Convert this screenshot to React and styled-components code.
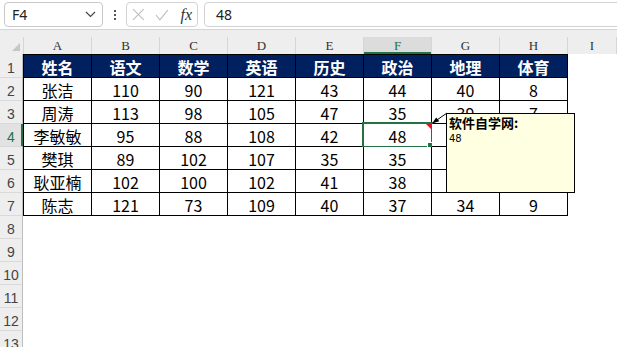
import styled, { createGlobalStyle } from "styled-components";

const GlobalStyle = createGlobalStyle`
  html, body { margin: 0; padding: 0; background: #fff; overflow: hidden; }
  body { font-family: "Noto Sans CJK SC", sans-serif; }
  * { box-sizing: border-box; }
`;

const GREEN = "#217346";

const Toolbar = styled.div`
  display: flex;
  align-items: center;
  height: 30px;
  padding-left: 4px;
  border-bottom: 1px solid #d4d4d4;
  background: #fff;
  overflow: hidden;
`;

const NameBox = styled.div`
  width: 99px;
  height: 25px;
  border: 1px solid #c9c9c9;
  border-radius: 4px;
  display: flex;
  align-items: center;
  justify-content: space-between;
  padding: 0 6px 0 7px;
  font: 14px "Noto Sans", "Liberation Sans", sans-serif;
  color: #222;
`;

const Dots = styled.div`
  width: 12px;
  margin: 0 5px 0 6px;
  display: flex;
  flex-direction: column;
  align-items: center;
  gap: 2px;
  & > span {
    width: 2px;
    height: 2px;
    background: #555;
  }
`;

const FxBox = styled.div`
  width: 72px;
  height: 25px;
  border: 1px solid #d2d2d2;
  border-radius: 4px;
  display: flex;
  align-items: center;
  padding: 0 5px 0 5px;
  gap: 10px;
  margin-right: 6px;
`;

const Fx = styled.span`
  font: italic 16px "Liberation Serif", serif;
  color: #333;
  margin-left: 2px;
`;

const Formula = styled.div`
  flex: 1;
  height: 25px;
  margin-right: -10px;
  border: 1px solid #d2d2d2;
  border-radius: 4px;
  display: flex;
  align-items: center;
  padding-left: 11px;
  font: 14px "Noto Sans", "Liberation Sans", sans-serif;
  color: #222;
`;

const Band = styled.div`
  height: 7px;
  background: #eeeeee;
`;

const Sheet = styled.div`
  display: flex;
  flex-direction: column;
`;

const HeadRow = styled.div`
  display: flex;
  height: 17px;
  background: #eeeeee;
`;

const Corner = styled.div`
  width: 24px;
  position: relative;
  border-right: 1px solid #d6d6d6;
  &::after {
    content: "";
    position: absolute;
    right: 3px;
    bottom: 3px;
    border-left: 8px solid transparent;
    border-bottom: 8px solid #c6c6c6;
  }
`;

const ColHead = styled.div`
  width: ${(p) => (p.$rest ? "auto" : "68px")};
  flex: ${(p) => (p.$rest ? 1 : "none")};
  display: flex;
  align-items: center;
  justify-content: center;
  border-right: 1px solid #d6d6d6;
  font: 13px "Liberation Serif", serif;
  color: ${(p) => (p.$active ? GREEN : "#333")};
  background: ${(p) => (p.$active ? "#dcdcdc" : "transparent")};
  box-shadow: ${(p) => (p.$active ? `inset 0 -2px 0 ${GREEN}` : "none")};
  padding-top: 1px;
`;

const Row = styled.div`
  display: flex;
  height: ${(p) => (p.$top ? "24px" : "23px")};
`;

const RowHead = styled.div`
  width: 23px;
  flex: none;
  display: flex;
  align-items: flex-end;
  justify-content: center;
  padding-bottom: 2px;
  background: ${(p) => (p.$active ? "#e2e2e2" : "#eeeeee")};
  border-right: 1px solid ${(p) => (p.$active ? GREEN : "#bdbdbd")};
  box-shadow: ${(p) => (p.$active ? `inset -1px 0 0 ${GREEN}` : "none")};
  border-bottom: 1px solid #d9d9d9;
  font: 14px "Liberation Sans", sans-serif;
  line-height: 1;
  color: ${(p) => (p.$active ? GREEN : "#444")};
`;

const Cell = styled.div`
  position: relative;
  width: ${(p) => (p.$first ? "69px" : "68px")};
  flex: none;
  display: flex;
  align-items: center;
  justify-content: center;
  padding-top: 2px;
  border-right: 1px solid #000;
  border-bottom: 1px solid #000;
  border-left: ${(p) => (p.$first ? "1px solid #000" : "none")};
  border-top: ${(p) => (p.$top ? "1px solid #000" : "none")};
  background: ${(p) => (p.$head ? "#002060" : "#fff")};
  color: ${(p) => (p.$head ? "#fff" : "#000")};
  font-weight: ${(p) => (p.$head ? 700 : 400)};
  font-size: 16px;
  line-height: 1;
`;

const Selection = styled.div`
  position: absolute;
  top: -2px;
  left: -2px;
  right: -2px;
  bottom: -2px;
  border: 2px solid ${GREEN};
  pointer-events: none;
  &::after {
    content: "";
    position: absolute;
    right: -5px;
    bottom: -5px;
    width: 7px;
    height: 7px;
    background: ${GREEN};
    border: 1px solid #fff;
  }
`;

const NoteMark = styled.div`
  position: absolute;
  top: 0;
  right: 0;
  border-left: 5px solid transparent;
  border-top: 5px solid #e81123;
`;

const Note = styled.div`
  position: absolute;
  left: 82px;
  top: -11px;
  width: 129px;
  height: 80px;
  z-index: 3;
  background: #ffffe1;
  border: 1px solid #000;
  padding: 1px 2px;
  text-align: left;
  color: #000;
  font-weight: 400;
`;

const NoteTitle = styled.div`
  font: 700 13px "Noto Sans CJK SC", sans-serif;
  line-height: 15px;
`;

const NoteText = styled.div`
  font: 10px "DejaVu Sans", sans-serif;
  margin-top: 3px;
`;

const Arrow = styled.svg`
  position: absolute;
  left: 64px;
  top: -14px;
  z-index: 3;
  overflow: visible;
`;

const cols = ["A", "B", "C", "D", "E", "F", "G", "H"];
const head = ["姓名", "语文", "数学", "英语", "历史", "政治", "地理", "体育"];
const data = [
  ["张洁", 110, 90, 121, 43, 44, 40, 8],
  ["周涛", 113, 98, 105, 47, 35, 39, 7],
  ["李敏敏", 95, 88, 108, 42, 48, 37, 8],
  ["樊琪", 89, 102, 107, 35, 35, 38, 9],
  ["耿亚楠", 102, 100, 102, 41, 38, 36, 8],
  ["陈志", 121, 73, 109, 40, 37, 34, 9],
];

export default function App() {
  return (
    <>
      <GlobalStyle />
      <Toolbar>
        <NameBox>
          F4
          <svg width="11" height="7" viewBox="0 0 11 7">
            <path d="M1 1l4.5 4.5L10 1" fill="none" stroke="#444" strokeWidth="1.2" />
          </svg>
        </NameBox>
        <Dots>
          <span />
          <span />
          <span />
        </Dots>
        <FxBox>
          <svg width="13" height="13" viewBox="0 0 13 13">
            <path d="M1 1l11 11M12 1L1 12" stroke="#bdbdbd" strokeWidth="1.1" />
          </svg>
          <svg width="14" height="12" viewBox="0 0 14 12">
            <path d="M1 6l4 5L13 1" fill="none" stroke="#bdbdbd" strokeWidth="1.1" />
          </svg>
          <Fx>fx</Fx>
        </FxBox>
        <Formula>48</Formula>
      </Toolbar>
      <Band />
      <Sheet>
        <HeadRow>
          <Corner />
          {cols.map((c) => (
            <ColHead key={c} $active={c === "F"}>
              {c}
            </ColHead>
          ))}
          <ColHead $rest>I</ColHead>
        </HeadRow>
        <Row $top>
          <RowHead>1</RowHead>
          {head.map((h, i) => (
            <Cell key={h} $head $top $first={i === 0}>
              {h}
            </Cell>
          ))}
        </Row>
        {data.map((r, ri) => (
          <Row key={ri}>
            <RowHead $active={ri === 2}>{ri + 2}</RowHead>
            {r.map((v, ci) => (
              <Cell key={ci} $first={ci === 0}>
                {v}
                {ri === 2 && ci === 5 && (
                  <>
                    <Selection />
                    <NoteMark />
                    <Arrow width="22" height="16" viewBox="0 0 22 16">
                      <line x1="6" y1="12" x2="19" y2="3" stroke="#000" strokeWidth="1" />
                      <polygon points="4,13.5 11.3,11.3 8.2,7.4" fill="#000" />
                    </Arrow>
                    <Note>
                      <NoteTitle>软件自学网:</NoteTitle>
                      <NoteText>48</NoteText>
                    </Note>
                  </>
                )}
              </Cell>
            ))}
          </Row>
        ))}
        {[8, 9, 10, 11, 12, 13].map((n) => (
          <Row key={n}>
            <RowHead>{n}</RowHead>
          </Row>
        ))}
      </Sheet>
    </>
  );
}
